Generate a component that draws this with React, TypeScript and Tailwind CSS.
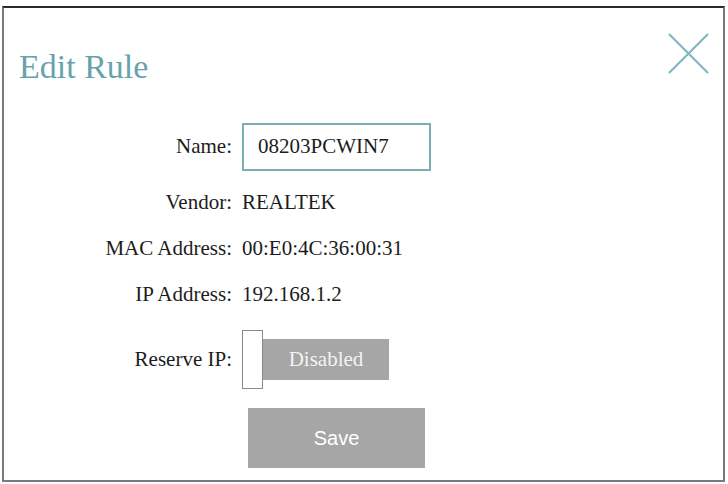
import React from "react";

const serif = { fontFamily: '"Liberation Serif", "Times New Roman", serif' };

function Row({ label, children, h }: { label: string; children: React.ReactNode; h: string }) {
  return (
    <div className={`flex items-center ${h}`}>
      <div className="w-[228px] text-right shrink-0">{label}</div>
      <div className="ml-[10px] flex items-center">{children}</div>
    </div>
  );
}

export default function App() {
  return (
    <div className="w-[728px] h-[484px] bg-white overflow-hidden" style={serif}>
      {/* Dialog frame */}
      <div className="ml-[2px] mt-[6px] w-[723px] h-[476px] border-2 border-[#7a7a7a] border-t-[#2a2a2a] flex flex-col text-[21px] text-[#1c1c1c]">
        {/* Header */}
        <div className="flex justify-between h-[115px]">
          <h1 className="ml-[15px] mt-[39px] text-[34px] leading-[40px] text-[#68a3ad]">Edit Rule</h1>
          <svg className="mt-[25px] mr-[14px]" width="41" height="41" viewBox="0 0 41 41" fill="none">
            <path d="M1.5 1.5 L39.5 39.5 M39.5 1.5 L1.5 39.5" stroke="#7ab7be" strokeWidth="2" strokeLinecap="round" />
          </svg>
        </div>

        {/* Fields */}
        <Row label="Name:" h="h-[48px]">
          <div className="w-[189px] h-[48px] border-2 border-[#78afb5] flex items-center pl-[14px]">08203PCWIN7</div>
        </Row>
        <div className="h-[9px]" />
        <Row label="Vendor:" h="h-[46px]">REALTEK</Row>
        <Row label="MAC Address:" h="h-[46px]">00:E0:4C:36:00:31</Row>
        <Row label="IP Address:" h="h-[46px]">192.168.1.2</Row>
        <div className="h-[12px]" />
        <Row label="Reserve IP:" h="h-[59px]">
          <div className="flex items-center">
            <div className="w-[21px] h-[59px] border border-[#8a8a8a] bg-white" />
            <div className="w-[126px] h-[41px] bg-[#a6a6a6] text-[#f4f4f4] flex items-center justify-center">Disabled</div>
          </div>
        </Row>

        {/* Save */}
        <div className="mt-[19px] ml-[244px]">
          <button
            className="w-[177px] h-[60px] bg-[#a6a6a6] text-white text-[20px]"
            style={{ fontFamily: '"Liberation Sans", Arial, sans-serif' }}
          >
            Save
          </button>
        </div>
      </div>
    </div>
  );
}
